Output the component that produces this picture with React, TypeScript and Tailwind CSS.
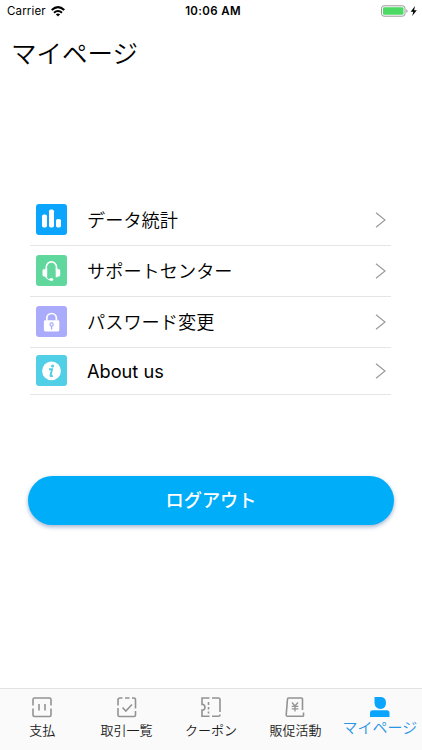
import { useState } from "react";
import type { ReactNode } from "react";

interface MenuItem {
    id: string;
    label: string;
    color: string;
    height: string;
    weight: string;
    icon: ReactNode;
}

interface TabItem {
    id: string;
    label: string;
    icon: ReactNode;
}

const menuItems: MenuItem[] = [
    {
        id: "stats",
        label: "データ統計",
        color: "bg-[#0ba5fd]",
        height: "h-[51px]",
        weight: "font-[350]",
        icon: (
            <svg width="31" height="31" viewBox="0 0 31 31" fill="#fff">
                <rect x="6" y="10.5" width="5" height="13" rx="1.8" />
                <rect x="13" y="5.5" width="5" height="18" rx="1.8" />
                <rect x="20" y="15" width="5" height="8.5" rx="1.8" />
            </svg>
        ),
    },
    {
        id: "support",
        label: "サポートセンター",
        color: "bg-[#5fd79d]",
        height: "h-[51px]",
        weight: "font-[350]",
        icon: (
            <svg width="31" height="31" viewBox="0 0 31 31" fill="none">
                <path d="M10.3 15v-3a5.1 5.1 0 0 1 10.2 0V15" stroke="#fff" strokeWidth="1.6" />
                <path d="M11.2 13.5v8.7H9.2V21.400H7.600Q6.500 21.400 6.500 20V15.600Q6.500 14.300 7.600 14.300H9.200V13.500zM19.700 13.500v8.700h1.900V21.400h1.500Q24.200 21.400 24.200 20V15.600Q24.200 14.300 23.100 14.300H21.600V13.500z" fill="#fff" />
                <path d="M10 21.500q.7 3 4.500 3" stroke="#fff" strokeWidth="1.100" />
                <ellipse cx="15.300" cy="24.600" rx="2" ry="1.500" fill="#fff" />
            </svg>
        ),
    },
    {
        id: "password",
        label: "パスワード変更",
        color: "bg-[#aaacfb]",
        height: "h-[51px]",
        weight: "font-[350]",
        icon: (
            <svg width="31" height="31" viewBox="0 0 31 31" fill="none">
                <path d="M10.800 14.500v-2.200a4.800 4.800 0 0 1 9.600 0V14.500" stroke="#fff" strokeWidth="1.700" />
                <rect x="7.900" y="14.200" width="15.400" height="11.200" rx="1.300" fill="#fff" />
                <circle cx="15.600" cy="18.400" r="1.600" stroke="#aaacfb" strokeWidth="1.200" />
                <path d="M15.600 20v3.500" stroke="#aaacfb" strokeWidth="1.400" />
            </svg>
        ),
    },
    {
        id: "about",
        label: "About us",
        color: "bg-[#50cfe6]",
        height: "h-[47px]",
        weight: "font-normal",
        icon: (
            <svg width="31" height="31" viewBox="0 0 31 31" fill="none">
                <circle cx="15.500" cy="15.900" r="9.400" fill="#fff" />
                <circle cx="16.600" cy="11" r="1.500" fill="#50cfe6" />
                <path d="M13 14.200h3L14.600 20.400q-.2 1.200 2.200.2" stroke="#50cfe6" strokeWidth="2" />
            </svg>
        ),
    },
];

const tabs: TabItem[] = [
    {
        id: "pay",
        label: "支払",
        icon: (
            <path d="M1 8.500V2.500Q1 1 2.500 1H17.500Q19 1 19 2.500V8.500M19 11.500V18Q19 19.500 17.500 19.500H2.500Q1 19.500 1 18V11.500M7 7v6.500M13 7v6.500" />
        ),
    },
    {
        id: "orders",
        label: "取引一覧",
        icon: (
            <path d="M1 11V18Q1 19.500 2.500 19.500H17Q18.500 19.500 18.500 18V14M1 8.500V3Q1 1 3 1H5.500M8 1h4.500M15 1h2Q18.500 1 18.500 3V11.500M5.500 10.500l3.300 3.500 6.200-6.500" />
        ),
    },
    {
        id: "coupon",
        label: "クーポン",
        icon: (
            <path d="M11 1H17.500Q19 1 19 2.500V15M19 17.500V18Q19 19.300 17.500 19.300H11M8.500 1H1V7.500H2.500Q4 8.500 4 10.200T2.500 13H1V19.300H8.500M7.500 5v3M7.500 10v2.500M7.500 14.500v2" />
        ),
    },
    {
        id: "campaign",
        label: "販促活動",
        icon: (
            <>
                <path d="M17.500 13V2Q17.500 1 16.500 1H3.500Q2.500 1 2.500 2L1.200 18Q1.200 19.300 2.500 19.300H17.500Q18.800 19.300 18.500 17.500V15.500" />
                <path d="M7 5.500L10 9L13 5.500M6.700 9.300H13.300M6.700 11.800H13.300M10 9V14.500" strokeWidth="1.300" />
            </>
        ),
    },
    {
        id: "mypage",
        label: "マイページ",
        icon: (
            <g fill="#0ba5fd" stroke="none">
                <path d="M4.500 0H11Q16 .5 16 6Q16 11.500 10.500 12Q5 11.700 4.500 6z" />
                <path d="M0 20v-4q0-2.800 2.800-2.800H16.700q2.800 0 2.800 2.800v4z" />
            </g>
        ),
    },
];

const StatusBar = () => (
    <div className="flex h-[22px] items-center pr-1 pl-[7px] text-black">
        <div className="flex flex-1 items-center gap-[5px]">
            <span className="pt-px text-[11.500px] tracking-[0.150px]">Carrier</span>
            <svg width="14" height="11" viewBox="0 0 14 11" fill="none" stroke="#000" strokeWidth="2">
                <path d="M.7 4.100Q7-1.800 13.300 4.100M3 6.700q4-3.500 8 0" />
                <path d="M7 10.500L4.800 8.300q2.200-1.700 4.400 0z" fill="#000" stroke="none" />
            </svg>
        </div>
        <span className="pt-px pl-px text-[11.500px] font-semibold tracking-[0.350px]">10:06 AM</span>
        <div className="flex flex-1 items-center justify-end">
            <svg width="37" height="12" viewBox="0 0 37 12" fill="none">
                <rect x=".5" y=".8" width="23.500" height="10.400" rx="2.500" stroke="#999" />
                <rect x="2" y="2.300" width="20.500" height="7.400" rx="1.200" fill="#4cd964" />
                <path d="M25.300 4.200q1.300.4 1.300 1.800t-1.300 1.800z" fill="#999" />
                <path d="M34 1L29.700 6.700h2.600L31.200 11l4.600-5.800h-2.700z" fill="#000" />
            </svg>
        </div>
    </div>
);

export default function App() {
    const [activeTab, setActiveTab] = useState<string>("mypage");

    return (
        <div className="flex h-[750px] w-full flex-col bg-white font-['Inter','Noto_Sans_CJK_JP',sans-serif] text-black">
            <StatusBar />
            <h1 className="pt-[13px] pl-[11px] text-[25.500px] leading-[38px] font-[350]">マイページ</h1>

            {/* Menu */}
            <ul className="mt-[122px] mr-[31px] ml-[30px]">
                {menuItems.map((item) => (
                    <li key={item.id} className={`flex items-center border-b border-[#e5e5e5] pr-[5px] pl-[6px] ${item.height}`}>
                        <span className={`mb-px size-[31px] shrink-0 overflow-hidden rounded-[3px] ${item.color}`}>{item.icon}</span>
                        <span className={`ml-5 flex-1 text-[18.200px] leading-[28px] ${item.weight}`}>{item.label}</span>
                        <svg width="11" height="16" viewBox="0 0 11 16" fill="none" stroke="#9b9b9b" strokeWidth="1.200">
                            <path d="M1 .8L10 8L1 15.200" />
                        </svg>
                    </li>
                ))}
            </ul>

            <button className="mx-7 mt-[81px] h-[49px] rounded-full bg-[#00adf9] text-[18.200px] font-medium text-white shadow-[0_2px_4px_rgba(50,90,150,0.45)]">
                ログアウト
            </button>

            {/* Tabs */}
            <nav className="mt-auto flex h-[62px] border-t border-[#e2e2e2] bg-[#fafafa]">
                {tabs.map((tab) => (
                    <button
                        key={tab.id}
                        onClick={() => setActiveTab(tab.id)}
                        className={`flex flex-1 flex-col items-center pt-[8px] whitespace-nowrap ${
                            activeTab === tab.id ? "text-[15px] font-[350] text-[#2994e5]" : "text-[13px] font-[350] text-[#1c1c1c]"
                        }`}
                    >
                        <svg width="20" height="21" viewBox="0 0 20 21" fill="none" stroke="#939393" strokeWidth="1.600">
                            {tab.icon}
                        </svg>
                        <span className={activeTab === tab.id ? "mt-px leading-[18px]" : "mt-[3px] leading-[18px]"}>{tab.label}</span>
                    </button>
                ))}
            </nav>
        </div>
    );
}
